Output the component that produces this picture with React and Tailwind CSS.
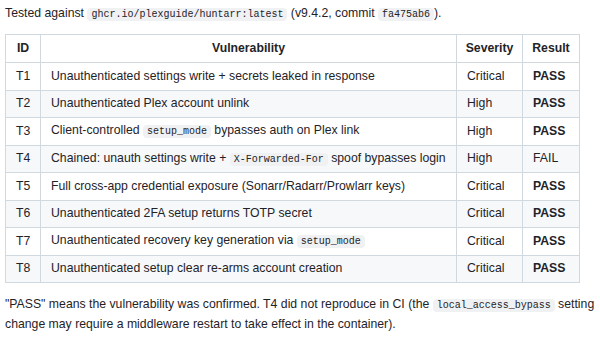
import React from "react";

const Code = ({ children }) => (
  <code className="rounded-[4px] bg-[#eff1f3] px-[4px] py-[1px] font-['Liberation_Mono',monospace] text-[10px] text-[#1f2328]">
    {children}
  </code>
);

const rows = [
  ["T1", <>Unauthenticated settings write + secrets leaked in response</>, "Critical", true],
  ["T2", <>Unauthenticated Plex account unlink</>, "High", true],
  ["T3", <>Client-controlled <Code>setup_mode</Code> bypasses auth on Plex link</>, "High", true],
  ["T4", <>Chained: unauth settings write + <Code>X-Forwarded-For</Code> spoof bypasses login</>, "High", false],
  ["T5", <>Full cross-app credential exposure (Sonarr/Radarr/Prowlarr keys)</>, "Critical", true],
  ["T6", <>Unauthenticated 2FA setup returns TOTP secret</>, "Critical", true],
  ["T7", <>Unauthenticated recovery key generation via <Code>setup_mode</Code></>, "Critical", true],
  ["T8", <>Unauthenticated setup clear re-arms account creation</>, "Critical", true],
];

export default function App() {
  return (
    <div className="h-[337px] w-[600px] overflow-hidden bg-white pl-[5px] pt-[4px] font-['Liberation_Sans',Arial,sans-serif] text-[12.25px] leading-[19px] text-[#1f2328]">
      <p>
        Tested against <Code>ghcr.io/plexguide/huntarr:latest</Code> (v9.4.2, commit <Code>fa475ab6</Code>).
      </p>

      <table className="mt-[10px] w-[574px] table-fixed border-collapse">
        <colgroup>
          <col className="w-[35px]" />
          <col className="w-[416px]" />
          <col className="w-[66px]" />
          <col className="w-[57px]" />
        </colgroup>
        <thead>
          <tr className="h-[28px]">
            <th className="border border-[#d1d9e0] px-[4px] text-center font-bold">ID</th>
            <th className="border border-[#d1d9e0] px-[4px] text-center font-bold">Vulnerability</th>
            <th className="border border-[#d1d9e0] px-[4px] text-center font-bold">Severity</th>
            <th className="border border-[#d1d9e0] px-[4px] text-center font-bold">Result</th>
          </tr>
        </thead>
        <tbody>
          {rows.map(([id, desc, sev, pass], i) => (
            <tr key={id} className={`h-[27.5px] ${i % 2 === 1 ? "bg-[#f6f8fa]" : "bg-white"}`}>
              <td className="border border-[#d1d9e0] px-[10px]">{id}</td>
              <td className="whitespace-nowrap border border-[#d1d9e0] px-[10px]">{desc}</td>
              <td className="border border-[#d1d9e0] px-[10px]">{sev}</td>
              <td className={`border border-[#d1d9e0] px-[10px] ${pass ? "font-bold" : ""}`}>
                {pass ? "PASS" : "FAIL"}
              </td>
            </tr>
          ))}
        </tbody>
      </table>

      <p className="mt-[12px] whitespace-nowrap">
        "PASS" means the vulnerability was confirmed. T4 did not reproduce in CI (the <Code>local_access_bypass</Code> setting
        <br />
        change may require a middleware restart to take effect in the container).
      </p>
    </div>
  );
}
